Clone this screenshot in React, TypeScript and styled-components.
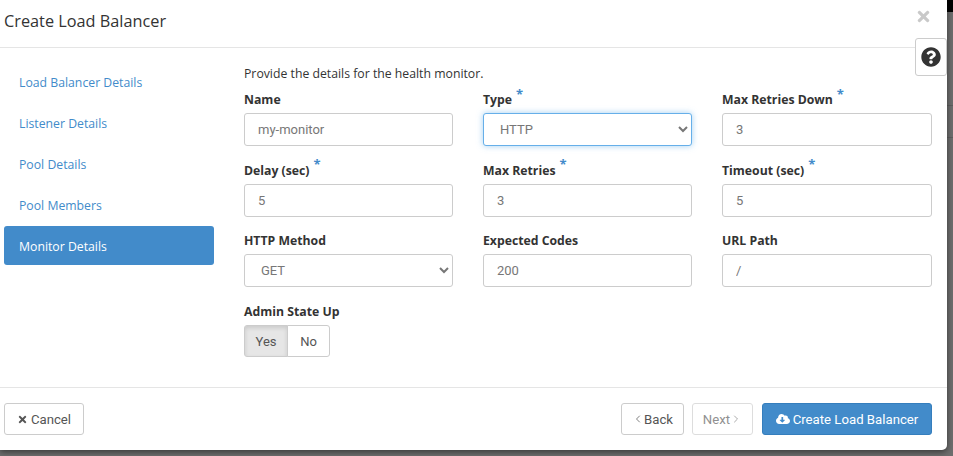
import * as React from "react";
import styled, { createGlobalStyle } from "styled-components";
import { FaTimes, FaQuestionCircle, FaCloudDownloadAlt } from "react-icons/fa";
import { ChevronLeft, ChevronRight } from "lucide-react";

const GlobalStyle = createGlobalStyle`
  html, body {
    margin: 0;
    height: 100%;
    overflow: hidden;
  }
  body {
    background: linear-gradient(
      to bottom,
      #000 0,
      #000 12px,
      #6e6e6e 12px,
      #6e6e6e 105px,
      #5e5e5e 105px,
      #5e5e5e 106px,
      #6e6e6e 106px,
      #6e6e6e 137px,
      #5e5e5e 137px,
      #5e5e5e 138px,
      #6e6e6e 138px
    );
    font-family: "Open Sans", "Liberation Sans", sans-serif;
    font-size: 12.25px;
    color: #333;
  }
`;

const Modal = styled.div`
  position: relative;
  box-sizing: border-box;
  width: 947px;
  height: 450px;
  background: #fff;
  border-radius: 0 0 5px 0;
  box-shadow: 0 2px 6px rgba(0, 0, 0, 0.5);
  display: flex;
  flex-direction: column;
`;

const Header = styled.header`
  box-sizing: border-box;
  height: 48px;
  padding: 11px 4px 0;
  border-bottom: 1px solid #e5e5e5;
`;

const Title = styled.h4`
  margin: 0;
  font-size: 16.3px;
  line-height: 20px;
  font-weight: 400;
  color: #333;
`;

const Close = styled.span`
  position: absolute;
  top: 8px;
  right: 15px;
  color: #c9c9c9;
  font-size: 17px;
  line-height: 1;
  display: flex;
`;

const HelpTab = styled.div`
  position: absolute;
  top: 38px;
  right: 0;
  box-sizing: border-box;
  width: 32px;
  height: 38px;
  background: #fff;
  border: 1px solid #ccc;
  border-radius: 3px;
  display: flex;
  align-items: center;
  justify-content: center;
  font-size: 20px;
  color: #333;
`;

const Body = styled.div`
  flex: 1;
  display: flex;
  padding: 14px 15px 0 4px;
  border-bottom: 1px solid #e5e5e5;
`;

const Nav = styled.nav`
  width: 210px;
  margin-right: 30px;
  display: flex;
  flex-direction: column;
  gap: 2px;
`;

const NavItem = styled.a<{ $active?: boolean }>`
  box-sizing: border-box;
  height: 39px;
  padding: 2px 15px 0;
  display: flex;
  align-items: center;
  border-radius: 3px;
  color: ${(p) => (p.$active ? "#fff" : "#428bca")};
  background: ${(p) => (p.$active ? "#428bca" : "transparent")};
`;

const Content = styled.div`
  flex: 1;
  padding-top: 3px;
`;

const Intro = styled.p`
  margin: 0 0 9px;
  line-height: 17px;
`;

const Grid = styled.div`
  display: grid;
  grid-template-columns: 209px 209px 210px;
  column-gap: 30px;
  row-gap: 15.5px;
`;

const Field = styled.div`
  display: flex;
  flex-direction: column;
`;

const Label = styled.label`
  font-weight: 700;
  line-height: 17px;
  height: 17px;
  margin-bottom: 5px;
`;

const Req = styled.sup`
  color: #428bca;
  font-size: 13px;
  line-height: 0;
  margin-left: 4px;
`;

const Input = styled.input`
  box-sizing: border-box;
  width: 100%;
  height: 33px;
  padding: 0 13px;
  border: 1px solid #ccc;
  border-radius: 3px;
  background: #fff;
  font-family: Roboto, "Liberation Sans", sans-serif;
  font-size: 13px;
  color: #777;
  outline: none;
`;

const Select = styled.select<{ $focus?: boolean }>`
  box-sizing: border-box;
  width: 100%;
  height: 33px;
  padding: 0 12px;
  border: 1px solid ${(p) => (p.$focus ? "#66afe9" : "#ccc")};
  border-radius: 3px;
  background: #fff;
  font-family: Roboto, "Liberation Sans", sans-serif;
  font-size: 13px;
  color: #777;
  outline: none;
  box-shadow: ${(p) => (p.$focus ? "0 0 6px rgba(102, 175, 233, 0.6)" : "none")};
`;

const Toggle = styled.div`
  display: flex;
  height: 32px;
`;

const ToggleButton = styled.span<{ $on?: boolean }>`
  box-sizing: border-box;
  width: ${(p) => (p.$on ? "44px" : "43px")};
  padding-top: 1px;
  display: flex;
  align-items: center;
  justify-content: center;
  font-family: Roboto, "Liberation Sans", sans-serif;
  font-size: 13px;
  color: #555;
  border: 1px solid #ccc;
  background: ${(p) => (p.$on ? "#e6e6e6" : "#fff")};
  box-shadow: ${(p) => (p.$on ? "inset 0 2px 4px rgba(0, 0, 0, 0.125)" : "none")};
  border-radius: ${(p) => (p.$on ? "3px 0 0 3px" : "0 3px 3px 0")};
  margin-left: ${(p) => (p.$on ? "0" : "-1px")};
`;

const Footer = styled.footer`
  box-sizing: border-box;
  height: 62px;
  padding: 15px 15px 0 4px;
  display: flex;
  justify-content: space-between;
`;

const Group = styled.div`
  display: flex;
  gap: 8px;
`;

const Btn = styled.button<{ $primary?: boolean; $w: number; $gap?: number }>`
  box-sizing: border-box;
  width: ${(p) => p.$w}px;
  height: 32px;
  padding: 0;
  display: inline-flex;
  align-items: center;
  justify-content: center;
  gap: ${(p) => p.$gap ?? 3}px;
  font-family: Roboto, "Liberation Sans", sans-serif;
  font-size: 13.2px;
  border-radius: 3px;
  border: 1px solid ${(p) => (p.$primary ? "#357ebd" : "#ccc")};
  background: ${(p) => (p.$primary ? "#428bca" : "#fff")};
  color: ${(p) => (p.$primary ? "#fff" : "#555")};
  &:disabled {
    opacity: 0.65;
  }
`;

const NextBtn = styled(Btn)`
  margin-right: 1px;
`;

export default function App() {
  return (
    <>
      <GlobalStyle />
      <Modal>
        <Header>
          <Title>Create Load Balancer</Title>
        </Header>
        <Close><FaTimes /></Close>
        <HelpTab><FaQuestionCircle /></HelpTab>
        <Body>
          <Nav>
            <NavItem>Load Balancer Details</NavItem>
            <NavItem>Listener Details</NavItem>
            <NavItem>Pool Details</NavItem>
            <NavItem>Pool Members</NavItem>
            <NavItem $active>Monitor Details</NavItem>
          </Nav>
          <Content>
            <Intro>Provide the details for the health monitor.</Intro>
            <Grid>
              <Field>
                <Label>Name</Label>
                <Input defaultValue="my-monitor" />
              </Field>
              <Field>
                <Label>Type<Req>*</Req></Label>
                <Select $focus defaultValue="HTTP"><option>HTTP</option></Select>
              </Field>
              <Field>
                <Label>Max Retries Down<Req>*</Req></Label>
                <Input defaultValue="3" />
              </Field>
              <Field>
                <Label>Delay (sec)<Req>*</Req></Label>
                <Input defaultValue="5" />
              </Field>
              <Field>
                <Label>Max Retries<Req>*</Req></Label>
                <Input defaultValue="3" />
              </Field>
              <Field>
                <Label>Timeout (sec)<Req>*</Req></Label>
                <Input defaultValue="5" />
              </Field>
              <Field>
                <Label>HTTP Method</Label>
                <Select defaultValue="GET"><option>GET</option></Select>
              </Field>
              <Field>
                <Label>Expected Codes</Label>
                <Input defaultValue="200" />
              </Field>
              <Field>
                <Label>URL Path</Label>
                <Input defaultValue="/" />
              </Field>
              <Field>
                <Label>Admin State Up</Label>
                <Toggle>
                  <ToggleButton $on>Yes</ToggleButton>
                  <ToggleButton>No</ToggleButton>
                </Toggle>
              </Field>
            </Grid>
          </Content>
        </Body>
        <Footer>
          <Btn $w={80}><FaTimes size={11} /> Cancel</Btn>
          <Group>
            <Btn $w={63} $gap={0}><ChevronLeft size={12} strokeWidth={1.5} />Back</Btn>
            <NextBtn $w={61} $gap={0} disabled>Next<ChevronRight size={12} strokeWidth={1.5} /></NextBtn>
            <Btn $w={170} $primary><FaCloudDownloadAlt size={14} /> Create Load Balancer</Btn>
          </Group>
        </Footer>
      </Modal>
    </>
  );
}
